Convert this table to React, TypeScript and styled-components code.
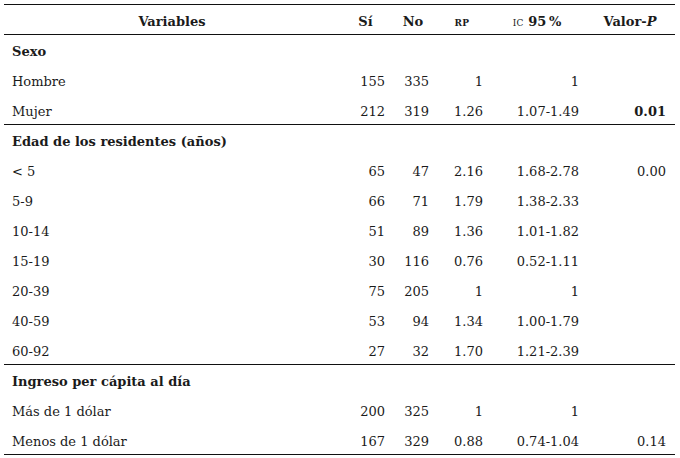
import { Fragment } from 'react';
import styled, { createGlobalStyle } from 'styled-components';

const GlobalStyle = createGlobalStyle`
  body {
    margin: 0;
    background: #ffffff;
    font-family: "DejaVu Serif", "Liberation Serif", serif;
    color: #1b1b1b;
  }
`;

const Page = styled.div`
  padding: 4px 5px 0 4px;
`;

const Table = styled.table`
  width: 671px;
  border-collapse: collapse;
  font-size: 13px;
  border-top: 1.5px solid #111;
  border-bottom: 1.5px solid #111;
`;

const HeadCell = styled.th<{ $w?: number }>`
  box-sizing: border-box;
  height: 30px;
  padding: 4px 0 0;
  font-weight: bold;
  text-align: center;
  border-bottom: 1.5px solid #111;
  width: ${p => (p.$w ? `${p.$w}px` : 'auto')};
`;

const Caps = styled.span<{ $light?: boolean }>`
  font-size: 9px;
  letter-spacing: 0.3px;
  font-weight: ${p => (p.$light ? 'normal' : 'bold')};
`;

const Row = styled.tr<{ $split?: boolean }>`
  border-bottom: ${p => (p.$split ? '1.5px solid #111' : 'none')};
`;

const LabelCell = styled.td<{ $group?: boolean }>`
  box-sizing: border-box;
  height: 30px;
  padding: 4px 0 0 8px;
  font-weight: ${p => (p.$group ? 'bold' : 'normal')};
`;

const NumCell = styled.td<{ $pad?: number; $bold?: boolean }>`
  box-sizing: border-box;
  height: 30px;
  padding: 4px ${p => p.$pad ?? 6}px 0 0;
  text-align: right;
  font-weight: ${p => (p.$bold ? 'bold' : 'normal')};
`;

type DataRow = {
  label: string;
  si: string;
  no: string;
  rp: string;
  ic: string;
  p?: string;
  boldP?: boolean;
};

type Group = { title: string; rows: DataRow[] };

const groups: Group[] = [
  {
    title: 'Sexo',
    rows: [
      { label: 'Hombre', si: '155', no: '335', rp: '1', ic: '1' },
      { label: 'Mujer', si: '212', no: '319', rp: '1.26', ic: '1.07-1.49', p: '0.01', boldP: true },
    ],
  },
  {
    title: 'Edad de los residentes (años)',
    rows: [
      { label: '< 5', si: '65', no: '47', rp: '2.16', ic: '1.68-2.78', p: '0.00' },
      { label: '5-9', si: '66', no: '71', rp: '1.79', ic: '1.38-2.33' },
      { label: '10-14', si: '51', no: '89', rp: '1.36', ic: '1.01-1.82' },
      { label: '15-19', si: '30', no: '116', rp: '0.76', ic: '0.52-1.11' },
      { label: '20-39', si: '75', no: '205', rp: '1', ic: '1' },
      { label: '40-59', si: '53', no: '94', rp: '1.34', ic: '1.00-1.79' },
      { label: '60-92', si: '27', no: '32', rp: '1.70', ic: '1.21-2.39' },
    ],
  },
  {
    title: 'Ingreso per cápita al día',
    rows: [
      { label: 'Más de 1 dólar', si: '200', no: '325', rp: '1', ic: '1' },
      { label: 'Menos de 1 dólar', si: '167', no: '329', rp: '0.88', ic: '0.74-1.04', p: '0.14' },
    ],
  },
];

export default function App() {
  return (
    <Page>
      <GlobalStyle />
      <Table>
        <thead>
          <tr>
            <HeadCell>Variables</HeadCell>
            <HeadCell $w={51}>Sí</HeadCell>
            <HeadCell $w={44}>No</HeadCell>
            <HeadCell $w={54}>
              <Caps>RP</Caps>
            </HeadCell>
            <HeadCell $w={96}>
              <Caps $light>IC</Caps> 95&#8201;%
            </HeadCell>
            <HeadCell $w={90}>
              Valor-<i>P</i>
            </HeadCell>
          </tr>
        </thead>
        <tbody>
          {groups.map((g, gi) => (
            <Fragment key={g.title}>
              <Row>
                <LabelCell $group colSpan={6}>
                  {g.title}
                </LabelCell>
              </Row>
              {g.rows.map((r, ri) => (
                <Row key={r.label} $split={ri === g.rows.length - 1 && gi < groups.length - 1}>
                  <LabelCell>{r.label}</LabelCell>
                  <NumCell>{r.si}</NumCell>
                  <NumCell>{r.no}</NumCell>
                  <NumCell>{r.rp}</NumCell>
                  <NumCell>{r.ic}</NumCell>
                  <NumCell $pad={9} $bold={r.boldP}>
                    {r.p}
                  </NumCell>
                </Row>
              ))}
            </Fragment>
          ))}
        </tbody>
      </Table>
    </Page>
  );
}
